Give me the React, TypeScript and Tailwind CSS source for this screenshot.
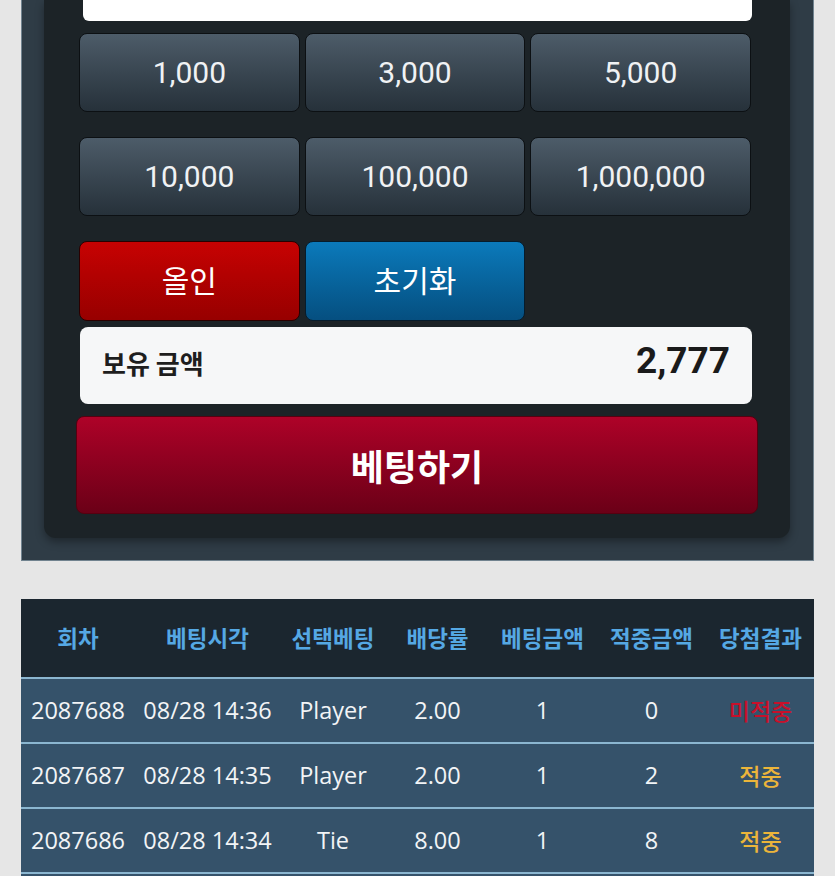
import React from 'react';

const amounts = ['1,000', '3,000', '5,000', '10,000', '100,000', '1,000,000'];

const history = [
  { round: '2087688', time: '08/28 14:36', pick: 'Player', odds: '2.00', bet: '1', win: '0', result: '미적중' },
  { round: '2087687', time: '08/28 14:35', pick: 'Player', odds: '2.00', bet: '1', win: '2', result: '적중' },
  { round: '2087686', time: '08/28 14:34', pick: 'Tie', odds: '8.00', bet: '1', win: '8', result: '적중' },
];

const headers = ['회차', '베팅시각', '선택베팅', '배당률', '베팅금액', '적중금액', '당첨결과'];

const cols = 'grid grid-cols-[114px_145px_106px_103px_107px_111px_107px]';

function BetPanel() {
  return (
    <div className="ml-[21px] w-[793px] bg-[#2f3c46] border-x border-b border-[#71838f] pl-[22px] pr-[23px] pb-[22px]">
      <div className="bg-[#1c2327] rounded-b-[12px] shadow-[0_4px_8px_rgba(0,0,0,0.35)] pl-[35px] pr-[39px] pb-[24px]">
        {/* amount input, cut off at the top */}
        <div className="h-[21px] ml-[4px] mr-[-1px] bg-white rounded-b-[6px]" />

        <div className="grid grid-cols-3 gap-x-[5px] gap-y-[25px] mt-[12px] font-['Roboto','Noto_Sans_CJK_KR',sans-serif]">
          {amounts.map((a) => (
            <button
              key={a}
              className="h-[79px] rounded-[8px] border border-[#0c1013] bg-gradient-to-b from-[#4d5c69] to-[#26313a] text-[30px] text-[#f0f2f4]"
            >
              {a}
            </button>
          ))}
          <button className="h-[80px] rounded-[8px] border border-[#2a0000] bg-gradient-to-b from-[#c70202] to-[#970000] text-[30px] text-white">
            올인
          </button>
          <button className="h-[80px] rounded-[8px] border border-[#061c2c] bg-gradient-to-b from-[#0b7abb] to-[#054f80] text-[30px] text-white">
            초기화
          </button>
        </div>

        <div className="mt-[6px] ml-[1px] mr-[-1px] h-[77px] rounded-[8px] bg-[#f6f7f8] flex items-center justify-between pl-[22px] pr-[22px]">
          <span className="text-[26px] font-bold text-[#1e1e1e] font-['Noto_Sans_CJK_KR',sans-serif] mt-[-6px]">보유 금액</span>
          <span className="text-[37px] font-bold text-[#1a1a1a] font-['Roboto',sans-serif] mt-[-9px]">2,777</span>
        </div>

        <button className="mt-[12px] ml-[-3px] mr-[-7px] w-[calc(100%+10px)] h-[98px] rounded-[8px] border border-[#560010] bg-gradient-to-b from-[#ae0228] to-[#6b0017] text-[36px] font-bold text-white font-['Noto_Sans_CJK_KR',sans-serif]">
          베팅하기
        </button>
      </div>
    </div>
  );
}

function HistoryTable() {
  return (
    <div className="ml-[21px] mt-[38px] w-[793px] font-['Open_Sans','Noto_Sans_CJK_KR',sans-serif]">
      <div className={`${cols} h-[78px] bg-[#1b262f] items-center`}>
        {headers.map((h) => (
          <div key={h} className="text-center text-[22.5px] font-bold text-[#55a8e4] font-['Noto_Sans_CJK_KR',sans-serif]">
            {h}
          </div>
        ))}
      </div>
      {history.map((r) => (
        <div key={r.round} className={`${cols} h-[65px] bg-[#35526a] border-t-2 border-[#8bb6d0] items-center text-[23.5px] text-[#f2f4f6]`}>
          <div className="text-center">{r.round}</div>
          <div className="text-center whitespace-nowrap">{r.time}</div>
          <div className="text-center">{r.pick}</div>
          <div className="text-center">{r.odds}</div>
          <div className="text-center">{r.bet}</div>
          <div className="text-center">{r.win}</div>
          <div
            className={
              r.result === '적중'
                ? "text-center text-[23px] font-medium text-[#ecb53a] font-['Noto_Sans_CJK_KR',sans-serif]"
                : "text-center text-[23px] font-medium text-[#c8102a] font-['Noto_Sans_CJK_KR',sans-serif]"
            }
          >
            {r.result}
          </div>
        </div>
      ))}
      <div className="h-[20px] bg-[#35526a] border-t-2 border-[#8bb6d0]" />
    </div>
  );
}

export default function App() {
  return (
    <div className="min-h-screen bg-[#e6e6e6] overflow-hidden">
      <BetPanel />
      <HistoryTable />
    </div>
  );
}
